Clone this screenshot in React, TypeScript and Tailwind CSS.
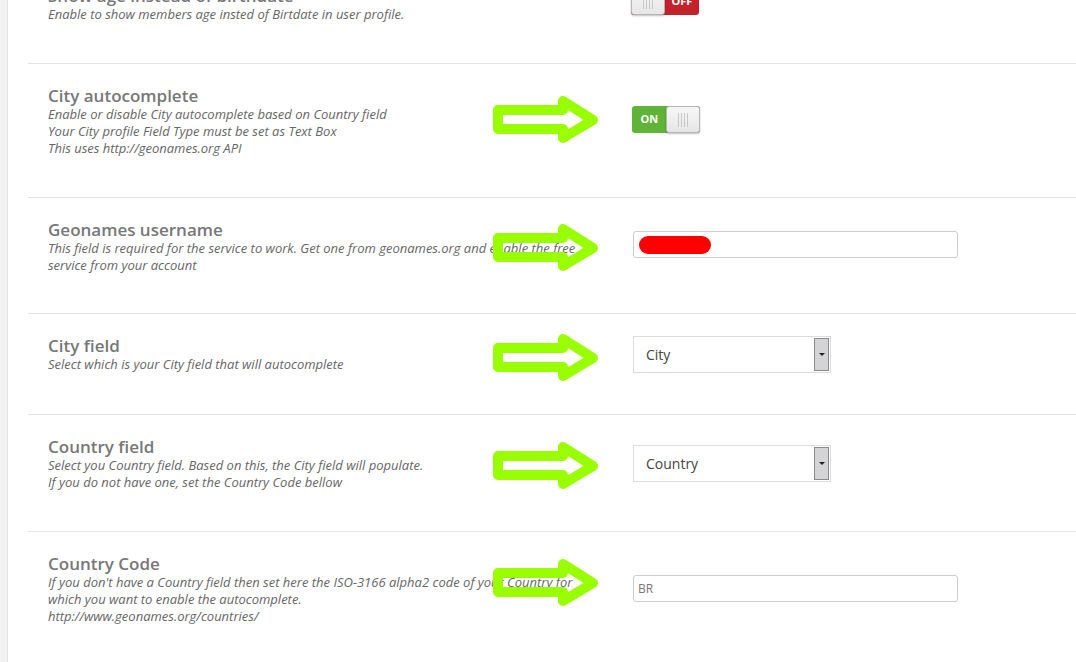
import type { ReactNode } from 'react';

const Arrow = ({ top }: { top: number }) => (
  <svg
    className="absolute left-[493px]"
    style={{ top }}
    width="110"
    height="50"
    viewBox="0 0 110 50"
    fill="none"
  >
    <polygon
      points="5,15 70,15 70,6 100,25 70,43 70,34 5,34"
      stroke="#99ff00"
      strokeWidth="10"
      strokeLinejoin="round"
    />
  </svg>
);

const Grip = () => (
  <div className="flex gap-[2px]">
    <span className="w-px h-[14px] bg-[#c8c8c8]" />
    <span className="w-px h-[14px] bg-[#c8c8c8]" />
    <span className="w-px h-[14px] bg-[#c8c8c8]" />
    <span className="w-px h-[14px] bg-[#c8c8c8]" />
  </div>
);

const Knob = () => (
  <div className="w-[34px] h-[27px] rounded-[3px] border border-[#b5b5b5] bg-gradient-to-b from-[#f7f7f7] to-[#e6e6e6] flex items-center justify-center shadow-[0_1px_2px_rgba(0,0,0,0.25)]">
    <Grip />
  </div>
);

const ToggleOn = () => (
  <div className="flex w-[68px] h-[27px] rounded-[3px] bg-[#5fb336]">
    <div className="w-[35px] flex items-center justify-center text-[11px] font-bold text-white">ON</div>
    <Knob />
  </div>
);

const ToggleOff = () => (
  <div className="flex w-[68px] h-[27px] rounded-[3px] bg-[#c4222b]">
    <Knob />
    <div className="flex-1 flex items-center justify-center text-[11px] font-bold text-white">OFF</div>
  </div>
);

const TextBox = ({ children }: { children?: ReactNode }) => (
  <div className="w-[325px] h-[27px] border border-[#cccccc] rounded-[3px] bg-white flex items-center px-[4px] text-[12px] text-[#777]">
    {children}
  </div>
);

const Select = ({ value }: { value: string }) => (
  <div className="w-[198px] h-[37px] border border-[#dcdcdc] bg-white flex items-stretch">
    <div className="flex-1 flex items-center pl-[12px] text-[14px] text-[#444]">{value}</div>
    <div className="w-[15px] my-[1px] mr-[1px] border border-[#8a8a8a] bg-[#d4d4d6] flex items-center justify-center">
      <span className="w-0 h-0 border-l-[3px] border-r-[3px] border-t-[3px] border-l-transparent border-r-transparent border-t-[#222]" />
    </div>
  </div>
);

type RowProps = {
  title: string;
  lines: string[];
  control: ReactNode;
  ctrlTop: string;
  last?: boolean;
  extra?: string;
};

const Row = ({ title, lines, control, ctrlTop, last, extra }: RowProps) => (
  <div className={`flex pl-[20px] pt-[23px] ${last ? '' : 'border-b border-[#e3e3e3]'} ${extra ?? 'pb-[40px]'}`}>
    <div className="w-[585px] shrink-0">
      <div className="text-[17px] leading-[17px] mb-[2px] font-semibold text-[#777]">{title}</div>
      {lines.map((l) => (
        <div key={l} className="text-[13px] leading-[17px] italic text-[#666] whitespace-nowrap">
          {l}
        </div>
      ))}
    </div>
    <div className={ctrlTop}>{control}</div>
  </div>
);

export default function App() {
  return (
    <div
      className="relative w-[1076px] h-[662px] overflow-hidden bg-white flex"
      style={{ fontFamily: '"Open Sans", "Noto Sans", sans-serif' }}
    >
      <div className="w-[8px] shrink-0 bg-[#f1f1f1] border-r border-[#e4e4e4]" />
      <div className="flex-1 pl-[20px]">
        <Row
          extra="-mt-[36px] pb-[40px]"
          title="Show age instead of birthdate"
          lines={['Enable to show members age insted of Birtdate in user profile.']}
          control={<ToggleOff />}
          ctrlTop="-ml-[2px] mt-[1px]"
        />
        <Row
          title="City autocomplete"
          lines={[
            'Enable or disable City autocomplete based on Country field',
            'Your City profile Field Type must be set as Text Box',
            'This uses http://geonames.org API',
          ]}
          control={<ToggleOn />}
          ctrlTop="-ml-[1px] mt-[19px]"
        />
        <Row
          extra="pb-[39px]"
          title="Geonames username"
          lines={[
            'This field is required for the service to work. Get one from geonames.org and enable the free',
            'service from your account',
          ]}
          control={
            <TextBox>
              <span className="w-[72px] h-[18px] rounded-full bg-[#ff0000] ml-px" />
            </TextBox>
          }
          ctrlTop="mt-[10px]"
        />
        <Row
          extra="pb-[41px]"
          title="City field"
          lines={['Select which is your City field that will autocomplete']}
          control={<Select value="City" />}
          ctrlTop="-mt-[1px]"
        />
        <Row
          title="Country field"
          lines={[
            'Select you Country field. Based on this, the City field will populate.',
            'If you do not have one, set the Country Code bellow',
          ]}
          control={<Select value="Country" />}
          ctrlTop="mt-[7px]"
        />
        <Row
          last
          title="Country Code"
          lines={[
            "If you don't have a Country field then set here the ISO-3166 alpha2 code of your Country for",
            'which you want to enable the autocomplete.',
            'http://www.geonames.org/countries/',
          ]}
          control={<TextBox>BR</TextBox>}
          ctrlTop="mt-[20px]"
        />
      </div>
      <Arrow top={95} />
      <Arrow top={223} />
      <Arrow top={333} />
      <Arrow top={441} />
      <Arrow top={558} />
    </div>
  );
}
